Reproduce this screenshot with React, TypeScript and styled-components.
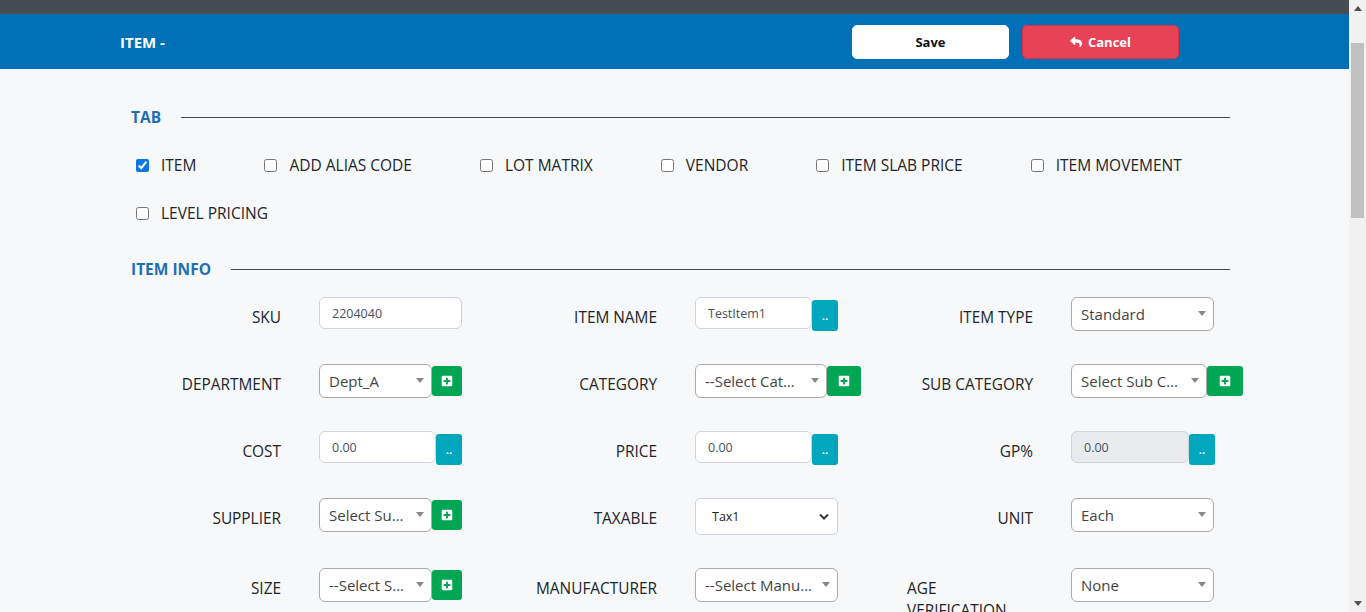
import { FunctionComponent } from "react";
import styled, { createGlobalStyle } from "styled-components";
import { FaPlusSquare, FaReply } from "react-icons/fa";

const GlobalStyle = createGlobalStyle`
  html, body {
    margin: 0;
    padding: 0;
    background: #f7f8fa;
    font-family: "Open Sans", "Noto Sans", "Liberation Sans", sans-serif;
    color: #212529;
  }
  * {
    box-sizing: border-box;
  }
`;

const Page = styled.div`
  display: flex;
  width: 1366px;
  height: 612px;
  overflow: hidden;
`;
const Main = styled.div`
  flex: 1;
  display: flex;
  flex-direction: column;
  min-width: 0;
`;
const TopStrip = styled.div`
  flex-shrink: 0;
  height: 14px;
  background: #464c54;
`;
const Header = styled.div`
  flex-shrink: 0;
  height: 55px;
  background: #0070b7;
  display: flex;
  align-items: center;
  padding: 0 170px 0 120px;
`;
const Title = styled.div`
  color: #ffffff;
  font-size: 15px;
  font-weight: 700;
`;
const Actions = styled.div`
  margin-left: auto;
  display: flex;
  gap: 13px;
`;
const HeaderButton = styled.button<{ $variant: "light" | "danger" }>`
  width: 157px;
  height: 34px;
  border-radius: 5px;
  border: 1px solid ${(p) => (p.$variant === "light" ? "#ffffff" : "#dc2c44")};
  background: ${(p) => (p.$variant === "light" ? "#ffffff" : "#e84257")};
  color: ${(p) => (p.$variant === "light" ? "#111111" : "#ffffff")};
  font-family: inherit;
  font-size: 13px;
  font-weight: 700;
  display: flex;
  align-items: center;
  justify-content: center;
  gap: 6px;
  padding: 0;
`;

const Content = styled.div`
  flex-shrink: 0;
  padding: 38px 119px 0 131px;
`;
const SectionHead = styled.div<{ $top: number }>`
  display: flex;
  align-items: center;
  gap: 20px;
  margin-top: ${(p) => p.$top}px;
`;
const SectionTitle = styled.div`
  color: #1f6fb2;
  font-size: 15.5px;
  font-weight: 700;
  line-height: 20px;
`;
const SectionLine = styled.div`
  flex: 1;
  height: 1px;
  background: #3e4a54;
`;

const TabList = styled.div`
  display: flex;
  flex-wrap: wrap;
  column-gap: 68px;
  row-gap: 24px;
  margin-top: 26px;
  padding-left: 5px;
`;
const TabOption = styled.label`
  display: flex;
  align-items: center;
  gap: 12px;
  height: 24px;
  font-size: 15.5px;
  color: #212529;
`;
const Check = styled.input`
  width: 13px;
  height: 13px;
  margin: 0;
  accent-color: #0b75e6;
`;

const FormGrid = styled.div`
  display: grid;
  grid-template-columns: repeat(3, 376px);
  margin-top: 18px;
`;
const Field = styled.div`
  display: grid;
  grid-template-columns: 150px auto;
  column-gap: 38px;
  align-items: start;
  margin-bottom: 33px;
`;
const Label = styled.div`
  display: flex;
  justify-content: flex-end;
  padding: 10px 0 0 24px;
  font-size: 15.4px;
  line-height: 22px;
  color: #212529;
`;
const Control = styled.div`
  display: flex;
  align-items: flex-start;
`;
const TextInput = styled.input<{ $w: number }>`
  width: ${(p) => p.$w}px;
  height: 32px;
  border: 1px solid #ced4da;
  border-radius: 6px;
  padding: 0 12px;
  font-family: inherit;
  font-size: 12.5px;
  color: #495057;
  background: ${(p) => (p.disabled ? "#e9ecef" : "#ffffff")};
  outline: none;
`;
const DotButton = styled.div`
  width: 26px;
  height: 31px;
  margin-top: 3px;
  border-radius: 3px;
  background: #00a7bd;
  color: #ffffff;
  font-size: 11px;
  font-weight: 700;
  display: flex;
  align-items: center;
  justify-content: center;
  padding-bottom: 1px;
`;
const SelectBox = styled.div<{ $w: number }>`
  position: relative;
  width: ${(p) => p.$w}px;
  height: 34px;
  border: 1px solid #aaaaaa;
  border-radius: 6px;
  background: #ffffff;
  padding: 0 22px 0 9px;
  font-size: 15px;
  line-height: 33px;
  color: #444444;
  white-space: nowrap;
  overflow: hidden;
`;
const Caret = styled.span`
  position: absolute;
  top: 13px;
  right: 7px;
  width: 0;
  height: 0;
  border-left: 4px solid transparent;
  border-right: 4px solid transparent;
  border-top: 5px solid #888888;
`;
const AddButton = styled.div<{ $w: number }>`
  width: ${(p) => p.$w}px;
  height: 30px;
  margin-top: 2px;
  border-radius: 3px;
  background: #00a651;
  color: #ffffff;
  display: flex;
  align-items: center;
  justify-content: center;
`;
const NativeSelect = styled.div`
  width: 143px;
  height: 37px;
  border: 1px solid #ced4da;
  border-radius: 5px;
  background: #ffffff;
  display: flex;
  align-items: center;
  justify-content: space-between;
  padding: 0 8px 0 16px;
  font-size: 12.5px;
  color: #212529;
`;

const ScrollBar = styled.div`
  flex-shrink: 0;
  width: 17px;
  height: 612px;
  background: #f1f1f1;
  display: flex;
  flex-direction: column;
`;
const ScrollArrow = styled.div`
  height: 17px;
  display: flex;
  align-items: center;
  justify-content: center;
`;
const ScrollThumb = styled.div`
  height: 175px;
  margin: 26px 2px 0;
  background: #c1c1c1;
`;
const ScrollSpace = styled.div`
  flex: 1;
`;

type FieldDef =
  | { label: string; kind: "text"; value: string; w: number; dots?: boolean; disabled?: boolean }
  | { label: string; kind: "select"; value: string; w: number; add?: number }
  | { label: string; kind: "native"; value: string };

const fields: FieldDef[] = [
  { label: "SKU", kind: "text", value: "2204040", w: 143 },
  { label: "ITEM NAME", kind: "text", value: "TestItem1", w: 117, dots: true },
  { label: "ITEM TYPE", kind: "select", value: "Standard", w: 143 },
  { label: "DEPARTMENT", kind: "select", value: "Dept_A", w: 113, add: 30 },
  { label: "CATEGORY", kind: "select", value: "--Select Cat…", w: 132, add: 34 },
  { label: "SUB CATEGORY", kind: "select", value: "Select Sub C…", w: 136, add: 36 },
  { label: "COST", kind: "text", value: "0.00", w: 117, dots: true },
  { label: "PRICE", kind: "text", value: "0.00", w: 117, dots: true },
  { label: "GP%", kind: "text", value: "0.00", w: 118, dots: true, disabled: true },
  { label: "SUPPLIER", kind: "select", value: "Select Su…", w: 113, add: 30 },
  { label: "TAXABLE", kind: "native", value: "Tax1" },
  { label: "UNIT", kind: "select", value: "Each", w: 143 },
  { label: "SIZE", kind: "select", value: "--Select S…", w: 113, add: 30 },
  { label: "MANUFACTURER", kind: "select", value: "--Select Manu…", w: 143 },
  { label: "AGE VERIFICATION", kind: "select", value: "None", w: 143 },
];

const tabs = ["ITEM", "ADD ALIAS CODE", "LOT MATRIX", "VENDOR", "ITEM SLAB PRICE", "ITEM MOVEMENT", "LEVEL PRICING"];

const renderControl = (f: FieldDef) => {
  if (f.kind === "text") {
    return (
      <Control>
        <TextInput $w={f.w} defaultValue={f.value} disabled={f.disabled} readOnly />
        {f.dots && <DotButton>..</DotButton>}
      </Control>
    );
  }
  if (f.kind === "native") {
    return (
      <Control>
        <NativeSelect>
          <span>{f.value}</span>
          <svg width="10" height="7" viewBox="0 0 10 7">
            <polyline points="1,1.5 5,5.5 9,1.5" fill="none" stroke="#343a40" strokeWidth="2" />
          </svg>
        </NativeSelect>
      </Control>
    );
  }
  return (
    <Control>
      <SelectBox $w={f.w}>
        {f.value}
        <Caret />
      </SelectBox>
      {f.add && (
        <AddButton $w={f.add}>
          <FaPlusSquare size={12} />
        </AddButton>
      )}
    </Control>
  );
};

const App: FunctionComponent = () => {
  return (
    <Page>
      <GlobalStyle />
      <Main>
        <TopStrip />
        <Header>
          <Title>ITEM -</Title>
          <Actions>
            <HeaderButton $variant="light">Save</HeaderButton>
            <HeaderButton $variant="danger">
              <FaReply size={12} />
              Cancel
            </HeaderButton>
          </Actions>
        </Header>
        <Content>
          <SectionHead $top={0}>
            <SectionTitle>TAB</SectionTitle>
            <SectionLine />
          </SectionHead>
          <TabList>
            {tabs.map((t, i) => (
              <TabOption key={t}>
                <Check type="checkbox" defaultChecked={i === 0} />
                {t}
              </TabOption>
            ))}
          </TabList>
          <SectionHead $top={34}>
            <SectionTitle>ITEM INFO</SectionTitle>
            <SectionLine />
          </SectionHead>
          <FormGrid>
            {fields.map((f) => (
              <Field key={f.label}>
                <Label>
                  <span>{f.label}</span>
                </Label>
                {renderControl(f)}
              </Field>
            ))}
          </FormGrid>
        </Content>
      </Main>
      <ScrollBar>
        <ScrollArrow>
          <svg width="8" height="5" viewBox="0 0 8 5">
            <polygon points="0,5 4,0 8,5" fill="#505050" />
          </svg>
        </ScrollArrow>
        <ScrollThumb />
        <ScrollSpace />
        <ScrollArrow>
          <svg width="8" height="5" viewBox="0 0 8 5">
            <polygon points="0,0 8,0 4,5" fill="#505050" />
          </svg>
        </ScrollArrow>
      </ScrollBar>
    </Page>
  );
};

export default App;
